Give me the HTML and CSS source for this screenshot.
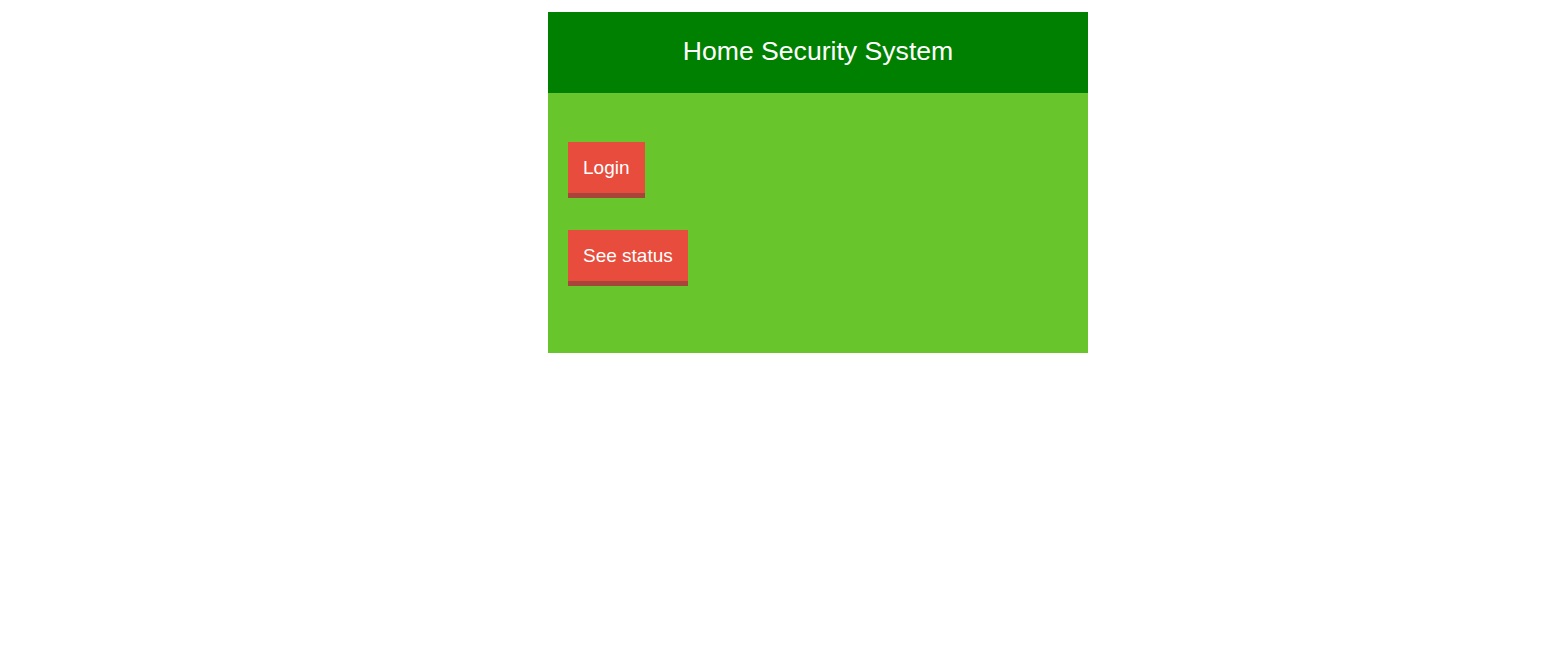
FILE: index.html
```html
<!DOCTYPE html>
<html>
<head>
<meta charset="utf-8">
<link rel="stylesheet" href="styles.css">
</head>
<body>
<div class="panel">
  <header class="header"><h1 class="title">Home Security System</h1></header>
  <main class="content">
    <button class="btn">Login</button>
    <button class="btn">See status</button>
  </main>
</div>
</body>
</html>
```

FILE: styles.css
```css
html, body {
  margin: 0;
  padding: 0;
  background: #ffffff;
  font-family: "Liberation Sans", Arial, sans-serif;
}
body {
  padding: 12px 0 0 548px;
}
.panel {
  width: 540px;
}
.header {
  background: #008000;
  height: 81px;
  display: flex;
  align-items: center;
  justify-content: center;
}
.title {
  margin: 0 0 2px;
  color: #ffffff;
  font-weight: normal;
  font-size: 26.6px;
}
.content {
  background: #69c52c;
  height: 260px;
  box-sizing: border-box;
  padding: 49px 20px 0;
  display: flex;
  flex-direction: column;
  align-items: flex-start;
  gap: 32px;
}
.btn {
  font-family: "Liberation Sans", Arial, sans-serif;
  font-size: 19px;
  color: #ffffff;
  background: #e74c3c;
  border: none;
  border-bottom: 5px solid #a8453a;
  height: 56px;
  padding: 0 15px;
  margin: 0;
  border-radius: 0;
}
```
